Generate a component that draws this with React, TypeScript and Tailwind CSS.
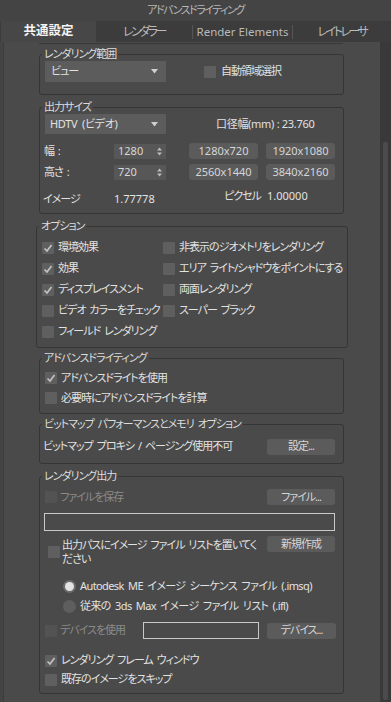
import type { ReactNode } from "react"

const font = "font-['Noto_Sans','Noto_Sans_CJK_JP',sans-serif] [font-feature-settings:'palt']"

function Check({ on, off }: { on?: boolean; off?: boolean }) {
  return (
    <span
      className={`flex h-[12px] w-[12px] shrink-0 items-center justify-center rounded-[1px] ${
        off ? "bg-[#535353]" : "bg-[#5f5f5f]"
      }`}
    >
      {on && (
        <svg width="10" height="10" viewBox="0 0 10 10">
          <polyline points="1.5,5.5 4,8 8.5,2" fill="none" stroke="#c2c2c2" strokeWidth="1.7" />
        </svg>
      )}
    </span>
  )
}

function Btn({ children, w = "w-[68px]" }: { children: ReactNode; w?: string }) {
  return (
    <div className={`flex h-[16px] ${w} shrink-0 items-center justify-center rounded-[3px] bg-[#5b5b5b] text-[#d6d6d6]`}>
      {children}
    </div>
  )
}

function Caret() {
  return (
    <svg width="7" height="5" viewBox="0 0 7 5" className="ml-auto mr-[8px]">
      <polygon points="0,0 7,0 3.5,4.5" fill="#cfcfcf" />
    </svg>
  )
}

function Spinner({ value }: { value: string }) {
  return (
    <div className="flex h-[15px] w-[52px] items-center bg-[#575757] pl-[4px] tracking-normal text-[#d8d8d8]">
      {value}
      <svg width="5" height="9" viewBox="0 0 5 9" className="ml-auto mr-[4px]">
        <polygon points="0,3.5 5,3.5 2.5,0.5" fill="#bdbdbd" />
        <polygon points="0,5.5 5,5.5 2.5,8.5" fill="#bdbdbd" />
      </svg>
    </div>
  )
}

function Group({ label, className, children }: { label: string; className: string; children: ReactNode }) {
  return (
    <div className={`flex flex-col rounded-[3px] border border-[#353535] ${className}`}>
      <span className="-mt-[8px] ml-[2px] block w-fit bg-[#4a4a4a] px-[2px] leading-[14px] text-[#dcdcdc]">{label}</span>
      {children}
    </div>
  )
}

function Row({ on, label, h = "h-[21px]" }: { on?: boolean; label: string; h?: string }) {
  return (
    <div className={`flex ${h} items-center gap-[4px]`}>
      <Check on={on} />
      <span className="whitespace-nowrap">{label}</span>
    </div>
  )
}

export default function App() {
  return (
    <div
      className={`flex h-[702px] w-[391px] flex-col bg-[#444444] text-[11px] tracking-[-1px] [word-spacing:2px] text-[#e2e2e2] ${font}`}
    >
      <div className="flex h-[21px] items-center justify-center text-[11px] tracking-[-1.5px] text-[#b7b7b7]">
        アドバンスドライティング
      </div>

      <div className="flex h-[21px] bg-[#3c3c3c] text-[12px] text-[#b9b9b9]">
        <div className="ml-[1px] flex w-[95px] items-center justify-center bg-[#474747] text-[12.5px] font-bold tracking-normal text-[#f4f4f4]">
          共通設定
        </div>
        <div className="flex w-[96px] items-center justify-center tracking-[-2.5px]">レンダラー</div>
        <div className="h-[14px] w-px self-center bg-[#555555]" />
        <div className="flex w-[99px] items-center justify-center text-[11.5px] tracking-normal [word-spacing:0px]">
          Render Elements
        </div>
        <div className="h-[14px] w-px self-center bg-[#555555]" />
        <div className="flex flex-1 items-center justify-center tracking-[-2.5px]">レイトレーサ</div>
      </div>

      <div className="flex min-h-0 flex-1">
        <div className="w-[3px]" />
        <div className="flex flex-1 flex-col border-l border-[#3d3d3d] bg-[#4a4a4a]">
          <div className="ml-[35px] mt-[1px] h-px w-[304px] bg-[#383838]" />

          <Group label="レンダリング範囲" className="ml-[35px] mt-[10px] h-[41px] w-[305px]">
            <div className="flex h-[21px] items-center">
              <div className="ml-[5px] flex h-[21px] w-[121px] items-center bg-[#5c5c5c] pl-[6px]">
                ビュー
                <Caret />
              </div>
              <div className="ml-[38px] flex items-center gap-[5px]">
                <Check />
                <span>自動領域選択</span>
              </div>
            </div>
          </Group>

          <Group label="出力サイズ" className="ml-[35px] mt-[12px] h-[107px] w-[305px]">
            <div className="flex h-[20px] items-center">
              <div className="ml-[5px] flex h-[20px] w-[121px] items-center bg-[#5c5c5c] pl-[5px] tracking-[-0.3px]">
                HDTV (ビデオ)
                <Caret />
              </div>
              <span className="ml-[50px] tracking-[-0.3px] [word-spacing:0px]">口径幅(mm) : 23.760</span>
            </div>
            <div className="mt-[9px] flex h-[16px] items-center">
              <span className="w-[74px] pl-[4px]">幅 :</span>
              <Spinner value="1280" />
              <div className="ml-[23px] flex gap-[8px] tracking-normal">
                <Btn w="w-[69px]">1280x720</Btn>
                <Btn w="w-[69px]">1920x1080</Btn>
              </div>
            </div>
            <div className="mt-[5px] flex h-[16px] items-center">
              <span className="w-[74px] pl-[4px]">高さ :</span>
              <Spinner value="720" />
              <div className="ml-[23px] flex gap-[8px] tracking-normal">
                <Btn w="w-[69px]">2560x1440</Btn>
                <Btn w="w-[69px]">3840x2160</Btn>
              </div>
            </div>
            <div className="mt-[10px] flex h-[18px] items-center">
              <span className="w-[74px] pl-[3px]">イメージ</span>
              <span className="w-[110px] tracking-normal">1.77778</span>
              <div className="mb-[6px] flex items-center">
                <span className="w-[43px]">ピクセル</span>
                <span className="tracking-normal">1.00000</span>
              </div>
            </div>
          </Group>

          <Group label="オプション" className="ml-[32px] mt-[12px] h-[122px] w-[312px]">
            <div className="grid grid-cols-[121px_1fr] pl-[5px] pt-[4px]">
              <Row on label="環境効果" />
              <Row label="非表示のジオメトリをレンダリング" />
              <Row on label="効果" />
              <Row label="エリア ライト/シャドウをポイントにする" />
              <Row on label="ディスプレイスメント" />
              <Row label="両面レンダリング" />
              <Row label="ビデオ カラーをチェック" />
              <Row label="スーパー ブラック" />
              <Row label="フィールド レンダリング" />
            </div>
          </Group>

          <Group label="アドバンスドライティング" className="ml-[35px] mt-[10px] h-[56px] w-[305px]">
            <div className="pl-[5px] pt-[3px]">
              <Row on label="アドバンスドライトを使用" h="h-[20px]" />
              <Row label="必要時にアドバンスドライトを計算" h="h-[20px]" />
            </div>
          </Group>

          <Group label="ビットマップ パフォーマンスとメモリ オプション" className="ml-[35px] mt-[10px] h-[40px] w-[305px]">
            <div className="mt-[7px] flex h-[17px] items-center pl-[3px] pr-[8px]">
              <span>ビットマップ プロキシ / ページング使用不可</span>
              <div className="ml-auto">
                <Btn>設定...</Btn>
              </div>
            </div>
          </Group>

          <Group label="レンダリング出力" className="ml-[35px] mt-[12px] h-[218px] w-[305px]">
            <div className="mt-[6px] flex h-[16px] items-center pl-[5px] pr-[8px]">
              <Check off />
              <span className="ml-[3px] text-[#8b8b8b]">ファイルを保存</span>
              <div className="ml-auto">
                <Btn>ファイル...</Btn>
              </div>
            </div>
            <div className="ml-[4px] mt-[8px] h-[18px] w-[291px] border border-[#c8c8c8]" />
            <div className="mt-[5px] flex items-start pr-[8px]">
              <div className="ml-[8px] mt-[2px] flex items-center gap-[2px]">
                <Check />
                <span className="whitespace-nowrap leading-[14px]">
                  出力パスにイメージ ファイル リストを置いてく
                  <br />
                  ださい
                </span>
              </div>
              <div className="ml-auto">
                <Btn>新規作成</Btn>
              </div>
            </div>
            <div className="mt-[10px] flex h-[20px] items-center pl-[23px]">
              <span className="flex h-[13px] w-[13px] items-center justify-center rounded-full bg-[#6b6b6b]">
                <span className="h-[9px] w-[9px] rounded-full bg-[#e3e3e3]" />
              </span>
              <span className="ml-[4px] tracking-[-0.6px]">Autodesk ME イメージ シーケンス ファイル (.imsq)</span>
            </div>
            <div className="flex h-[21px] items-center pl-[23px]">
              <span className="h-[13px] w-[13px] rounded-full bg-[#5e5e5e]" />
              <span className="ml-[4px] tracking-[-0.6px]">従来の 3ds Max イメージ ファイル リスト (.ifl)</span>
            </div>
            <div className="mt-[5px] flex h-[17px] items-center">
              <div className="flex w-[103px] items-center pl-[5px]">
                <Check off />
                <span className="ml-[3px] text-[#8b8b8b]">デバイスを使用</span>
              </div>
              <div className="h-[17px] w-[116px] border border-[#c8c8c8]" />
              <div className="ml-[8px]">
                <Btn w="w-[69px]">デバイス...</Btn>
              </div>
            </div>
            <div className="mt-[12px] pl-[5px]">
              <Row on label="レンダリング フレーム ウィンドウ" h="h-[19px]" />
              <Row label="既存のイメージをスキップ" h="h-[19px]" />
            </div>
          </Group>
        </div>
        <div className="flex w-[11px] flex-col bg-[#393939] px-[3px] pb-[2px] pt-[100px]">
          <div className="flex-1 rounded-[2px] bg-[#4b4b4b]" />
        </div>
      </div>
    </div>
  )
}
